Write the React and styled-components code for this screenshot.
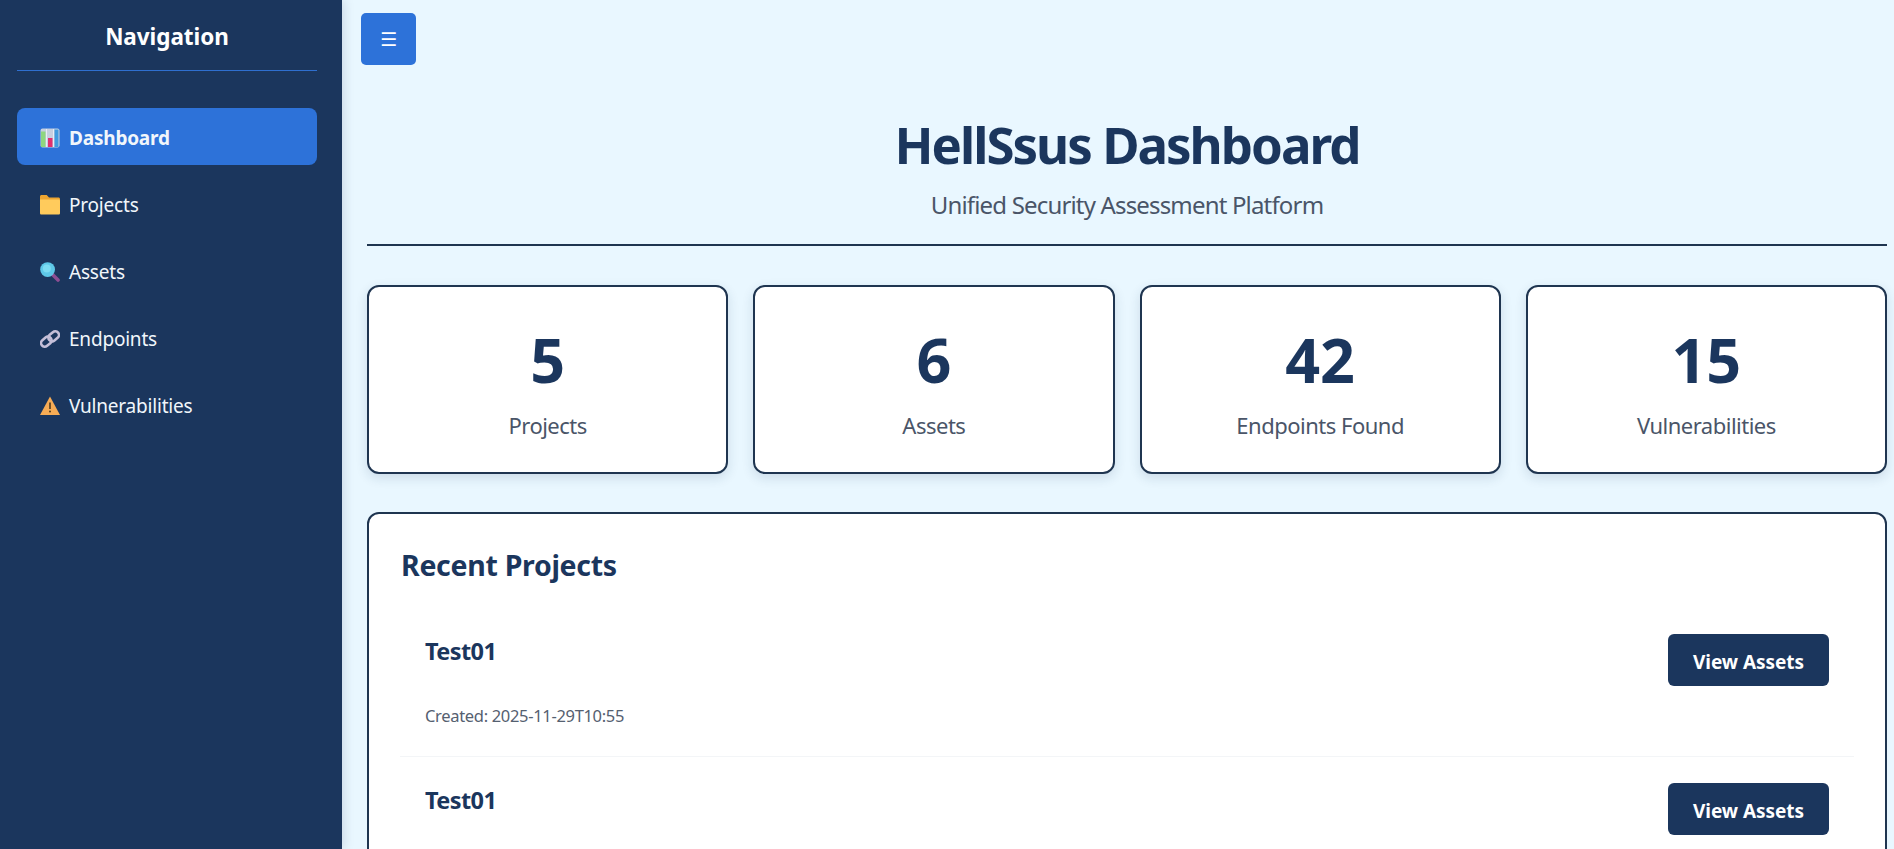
import React from 'react';
import styled, { createGlobalStyle } from 'styled-components';

const Global = createGlobalStyle`
  * { box-sizing: border-box; }
  html, body { margin: 0; height: 100%; overflow: hidden; }
  body { font-family: "Noto Sans", "Open Sans", sans-serif; background: #e9f7ff; }
`;

const Shell = styled.div`
  display: flex;
  height: 849px;
  overflow: hidden;
`;

const Sidebar = styled.aside`
  flex: 0 0 342px;
  padding: 0 25px 0 17px;
  background: #1b365d;
  color: #fff;
  box-shadow: 2px 0 10px rgba(27, 54, 93, 0.15);
  position: relative;
`;

const SideHead = styled.div`
  height: 71px;
  padding-top: 21px;
  border-bottom: 1px solid #2f6fcf;
  text-align: center;
`;

const SideTitle = styled.h2`
  margin: 0;
  font-size: 22.5px;
  line-height: 32px;
  font-weight: 700;
  letter-spacing: -0.05px;
`;

const NavList = styled.nav`
  display: flex;
  flex-direction: column;
  gap: 10px;
  margin-top: 37px;
`;

const NavItem = styled.a`
  display: flex;
  align-items: center;
  gap: 9px;
  height: 57px;
  padding: 2px 23px 0;
  border-radius: 8px;
  background: ${p => (p.$active ? '#2d72d9' : 'transparent')};
  color: #f1f6fb;
  font-size: 19px;
  font-weight: ${p => (p.$active ? 700 : 400)};
  letter-spacing: -0.2px;
`;

const Emoji = styled.svg`
  width: 20px;
  height: 20px;
  flex: none;
  margin-top: 1px;
`;

const Main = styled.main`
  flex: 1;
  min-width: 0;
  padding: 13px 7px 0 25px;
`;

const MenuButton = styled.button`
  display: block;
  width: 55px;
  height: 52px;
  margin-left: -6px;
  padding: 0;
  border: none;
  border-radius: 5px;
  background: #2d72d9;
  color: #fff;
  font-family: "DejaVu Sans", sans-serif;
  font-size: 19px;
`;

const Header = styled.header`
  margin-top: 44px;
  padding-bottom: 23px;
  border-bottom: 2px solid #1f3550;
  text-align: center;
`;

const Title = styled.h1`
  margin: 0;
  font-size: 51px;
  line-height: 70px;
  font-weight: 700;
  color: #1b365d;
  letter-spacing: -2px;
`;

const Subtitle = styled.p`
  margin: 9px 0 0;
  font-size: 24px;
  line-height: 33px;
  color: #4a5568;
  letter-spacing: -0.83px;
`;

const Stats = styled.section`
  display: grid;
  grid-template-columns: repeat(4, 1fr);
  gap: 25px;
  margin-top: 39px;
`;

const StatCard = styled.div`
  height: 189px;
  padding-top: 38px;
  background: #fff;
  border: 2px solid #1f3550;
  border-radius: 12px;
  box-shadow: 0 4px 12px rgba(27, 54, 93, 0.14);
  text-align: center;
`;

const StatValue = styled.div`
  font-size: 61px;
  line-height: 70px;
  font-weight: 700;
  color: #1b365d;
`;

const StatLabel = styled.div`
  margin-top: 15px;
  font-size: 22px;
  line-height: 30px;
  color: #4a5568;
  letter-spacing: -0.5px;
`;

const Panel = styled.section`
  margin-top: 38px;
  padding: 31px 32px 0;
  background: #fff;
  border: 2px solid #1f3550;
  border-radius: 12px;
`;

const PanelTitle = styled.h2`
  margin: 0 0 23px;
  font-size: 28.5px;
  line-height: 40px;
  font-weight: 700;
  color: #1b365d;
  letter-spacing: -0.3px;
`;

const Row = styled.article`
  display: flex;
  justify-content: space-between;
  align-items: flex-start;
  height: 149px;
  margin: 0 -1px;
  padding: 25px;
  border-bottom: 1px solid #f3f5f7;
`;

const RowInfo = styled.div``;

const RowName = styled.h3`
  margin: 0;
  font-size: 23.5px;
  line-height: 36px;
  font-weight: 700;
  color: #1b365d;
  letter-spacing: -0.6px;
`;

const RowMeta = styled.p`
  margin: 36px 0 0;
  font-size: 16.5px;
  line-height: 22px;
  color: #556070;
  letter-spacing: -0.32px;
`;

const ViewButton = styled.button`
  width: 161px;
  height: 52px;
  margin-top: 1px;
  padding: 3px 0 0;
  border: none;
  border-radius: 6px;
  background: #1b365d;
  color: #fff;
  font-family: inherit;
  font-size: 19px;
  font-weight: 700;
  letter-spacing: -0.05px;
`;

const ChartIcon = () => (
  <Emoji viewBox="0 0 20 20">
    <rect x="0.5" y="0.5" width="19" height="19" rx="2" fill="#c6cfe0" />
    <rect x="1" y="3.5" width="4.5" height="15.5" fill="#8fd67f" />
    <rect x="8" y="10" width="4.5" height="9" fill="#e0306e" />
    <rect x="14.5" y="1.5" width="4" height="17.5" fill="#3f9be0" />
    <path d="M6.5 1v18M13.5 1v18" stroke="#e8edf5" strokeWidth="1" />
  </Emoji>
);

const FolderIcon = () => (
  <Emoji viewBox="0 0 20 20">
    <path d="M0 1.5C0 .7.7 0 1.5 0h5.2l2.3 2.4h9.5c.8 0 1.5.7 1.5 1.5V8H0z" fill="#eda531" />
    <path d="M0 4.4h18.6c.8 0 1.4.6 1.4 1.4v12.4c0 .8-.6 1.4-1.4 1.4H1.4C.6 19.6 0 19 0 18.2z" fill="#ffcb5c" />
  </Emoji>
);

const SearchIcon = () => (
  <Emoji viewBox="0 0 20 20">
    <path d="M12 12l6 6" stroke="#8d4e93" strokeWidth="3.6" strokeLinecap="round" />
    <circle cx="7.6" cy="7.6" r="7.4" fill="#5ec8e8" />
    <circle cx="6.8" cy="6.6" r="4" fill="#7ddcf2" />
  </Emoji>
);

const LinkIcon = () => (
  <Emoji viewBox="0 0 20 20" fill="none" stroke="#c5bfd8" strokeWidth="2.6">
    <rect x="0.6" y="9" width="11.5" height="7.4" rx="3.7" transform="rotate(-40 6.3 12.7)" />
    <rect x="7.9" y="3.6" width="11.5" height="7.4" rx="3.7" transform="rotate(-40 13.7 7.3)" />
  </Emoji>
);

const WarnIcon = () => (
  <Emoji viewBox="0 0 20 20">
    <path d="M10 0.5L20 19H0z" fill="#f7ac55" />
    <path d="M10 6.5v6.5" stroke="#4e3a1e" strokeWidth="1.6" />
    <circle cx="10" cy="15.5" r="1" fill="#4e3a1e" />
  </Emoji>
);

const nav = [
  { label: 'Dashboard', Icon: ChartIcon, active: true },
  { label: 'Projects', Icon: FolderIcon },
  { label: 'Assets', Icon: SearchIcon },
  { label: 'Endpoints', Icon: LinkIcon },
  { label: 'Vulnerabilities', Icon: WarnIcon },
];

const stats = [
  { value: '5', label: 'Projects' },
  { value: '6', label: 'Assets' },
  { value: '42', label: 'Endpoints Found' },
  { value: '15', label: 'Vulnerabilities' },
];

export default function App() {
  return (
    <Shell>
      <Global />
      <Sidebar>
        <SideHead>
          <SideTitle>Navigation</SideTitle>
        </SideHead>
        <NavList>
          {nav.map(({ label, Icon, active }) => (
            <NavItem key={label} $active={active}>
              <Icon />
              {label}
            </NavItem>
          ))}
        </NavList>
      </Sidebar>
      <Main>
        <MenuButton>☰</MenuButton>
        <Header>
          <Title>HellSsus Dashboard</Title>
          <Subtitle>Unified Security Assessment Platform</Subtitle>
        </Header>
        <Stats>
          {stats.map(s => (
            <StatCard key={s.label}>
              <StatValue>{s.value}</StatValue>
              <StatLabel>{s.label}</StatLabel>
            </StatCard>
          ))}
        </Stats>
        <Panel>
          <PanelTitle>Recent Projects</PanelTitle>
          {[0, 1].map(i => (
            <Row key={i}>
              <RowInfo>
                <RowName>Test01</RowName>
                <RowMeta>Created: 2025-11-29T10:55</RowMeta>
              </RowInfo>
              <ViewButton>View Assets</ViewButton>
            </Row>
          ))}
        </Panel>
      </Main>
    </Shell>
  );
}
